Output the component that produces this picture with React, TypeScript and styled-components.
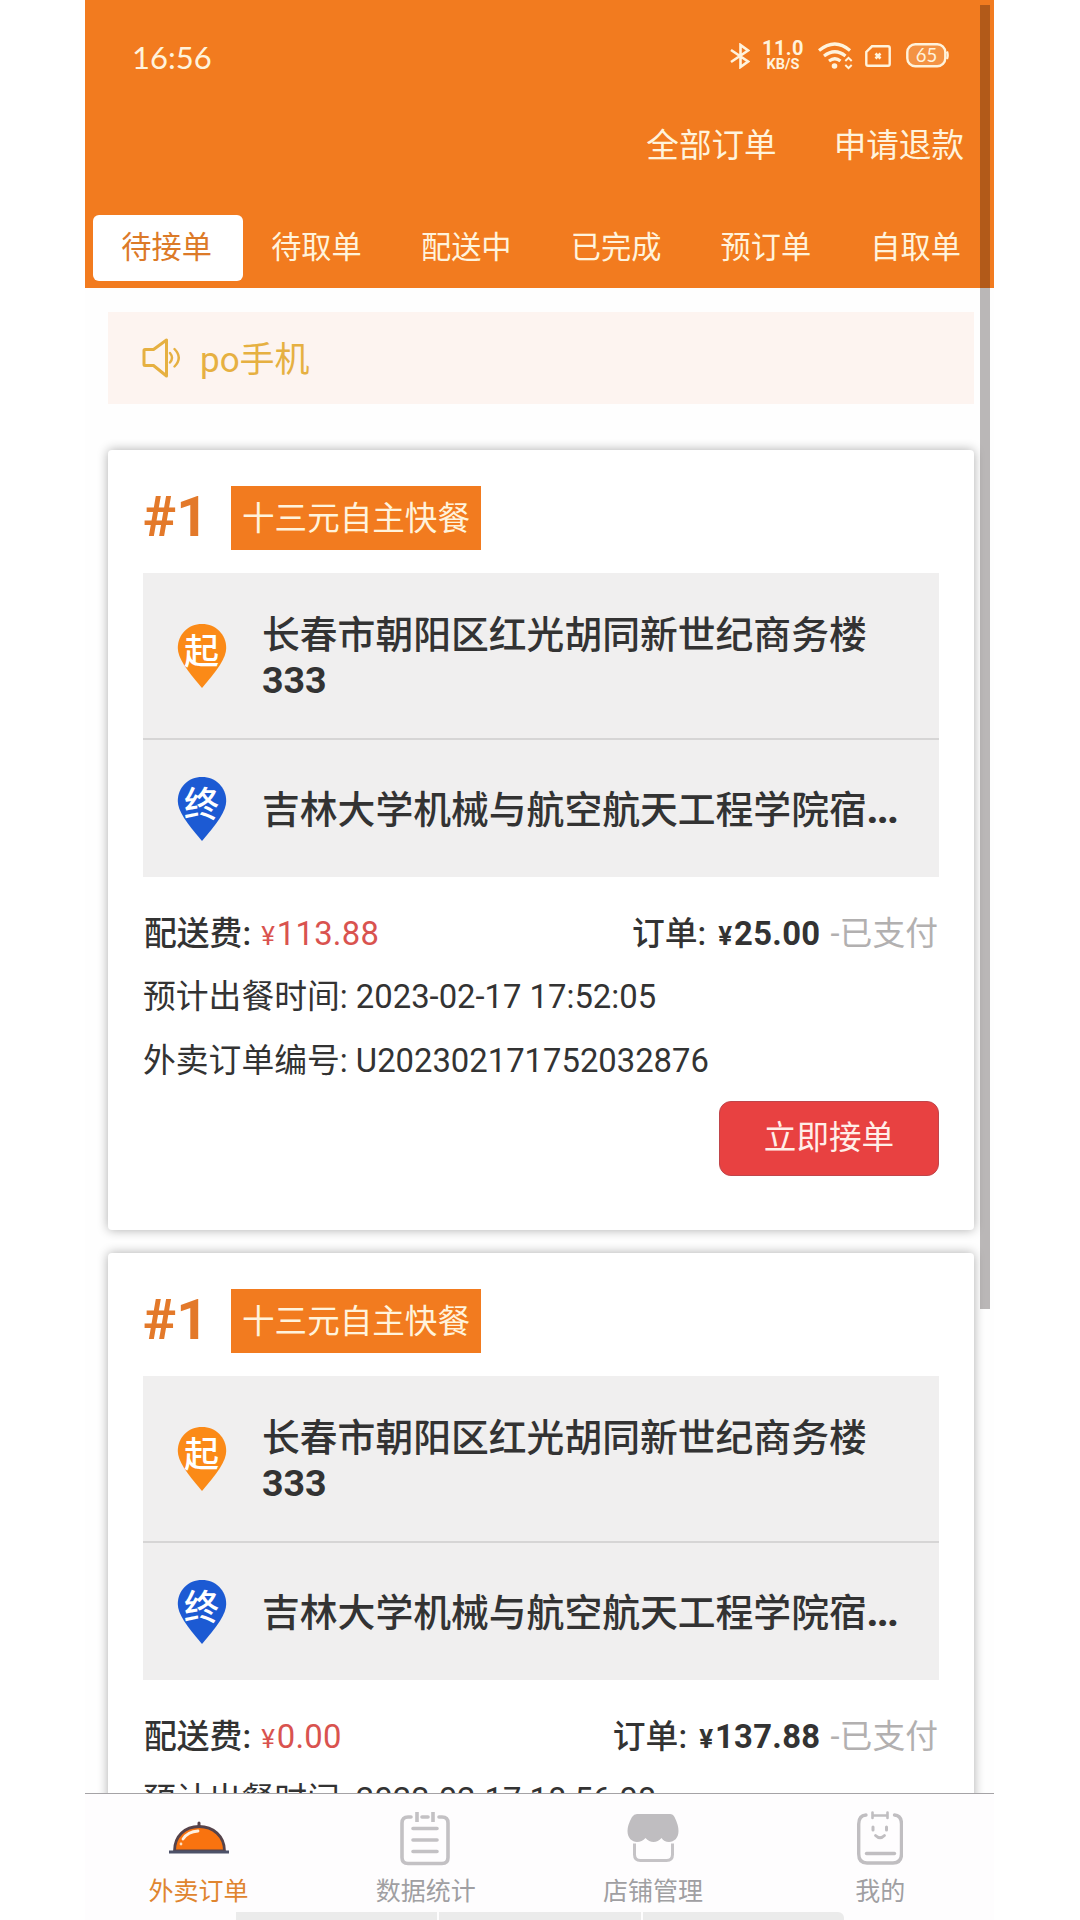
import React from "react";
import styled, { createGlobalStyle } from "styled-components";

const sans = `Roboto, "Noto Sans CJK SC", sans-serif`;

const Global = createGlobalStyle`
  * { box-sizing: border-box; }
  body { margin: 0; background: #fff; }
`;

const Screen = styled.div`
  position: relative;
  width: 909px;
  height: 1920px;
  margin-left: 85px;
  display: flex;
  flex-direction: column;
  overflow: hidden;
  background: #fefefe;
  color: #333;
  font-family: ${sans};
  white-space: nowrap;
`;

const Header = styled.header`
  flex: none;
  height: 288px;
  display: flex;
  flex-direction: column;
  background: #f27b1f;
  color: #fff3dc;
`;

const StatusBar = styled.div`
  height: 111px;
  padding: 0 45px 0 47px;
  display: flex;
  align-items: center;
  justify-content: space-between;
`;

const Clock = styled.span`
  padding-top: 2px;
  font: 400 31px/40px Lato, sans-serif;
`;

const StatusIcons = styled.div`
  display: flex;
  align-items: center;
`;

const Speed = styled.div`
  width: 44px;
  margin: 0 13px 0 11px;
  text-align: center;
  font-weight: 700;
  font-size: 20px;
  line-height: 18px;
  letter-spacing: 0.4px;
  padding-top: 1px;
`;

const SpeedUnit = styled.div`
  font-size: 14.5px;
  line-height: 16px;
  letter-spacing: 0;
`;

const SimSlot = styled.div`
  display: flex;
  margin: 0 15px 0 12px;
`;

const Links = styled.div`
  height: 68px;
  padding: 2px 30px 0 0;
  display: flex;
  justify-content: flex-end;
  align-items: center;
  gap: 57px;
  font-size: 32.6px;
  line-height: 48px;
`;

const Tabs = styled.nav`
  margin: 36px 0 0 8px;
  height: 66px;
  display: flex;
`;

const Tab = styled.div<{ $active?: boolean }>`
  flex: none;
  width: 149.8px;
  height: 66px;
  padding-right: 2.5px;
  border-radius: 6px;
  text-align: center;
  font-size: 30.2px;
  line-height: 65px;
  background: ${(p) => (p.$active ? "#fff" : "transparent")};
  color: ${(p) => (p.$active ? "#dc7a28" : "inherit")};
`;

const Feed = styled.main`
  flex: 1;
  min-height: 0;
  overflow: hidden;
  padding: 24px 20px 0 23px;
`;

const Notice = styled.div`
  height: 92px;
  margin-bottom: 46px;
  padding-left: 34px;
  display: flex;
  align-items: center;
  gap: 19px;
  background: #fdf4f0;
  color: #e6b041;
  font-size: 35px;
  line-height: 50px;
`;

const NoticeText = styled.span`
  padding-top: 5px;
`;

const Card = styled.article`
  height: 780px;
  margin-bottom: 23px;
  padding: 36px 35px 0;
  border-radius: 4px;
  background: #fff;
  box-shadow: 0 0 11px rgba(0, 0, 0, 0.32);
`;

const CardHead = styled.div`
  height: 64px;
  display: flex;
  align-items: center;
  gap: 28px;
`;

const Serial = styled.span`
  width: 60px;
  padding-bottom: 3px;
  font-weight: 700;
  font-size: 56px;
  line-height: 60px;
  color: #e3792a;
`;

const Shop = styled.span`
  width: 250px;
  height: 64px;
  text-align: center;
  background: #f27b1f;
  color: #fff3dc;
  font-size: 32.6px;
  line-height: 67px;
`;

const Route = styled.div`
  margin-top: 23px;
  background: #f0efef;
`;

const Stop = styled.div<{ $tall?: boolean }>`
  height: ${(p) => (p.$tall ? 167 : 137)}px;
  padding: 0 34px;
  display: flex;
  align-items: center;
  gap: 35px;
  border-bottom: ${(p) => (p.$tall ? "2px solid #d6d5d5" : "none")};
`;

const Address = styled.div`
  padding-top: 5px;
  font-weight: 500;
  font-size: 37.8px;
  line-height: 45.5px;
`;

const RoomNo = styled.div`
  font-weight: 700;
  font-size: 37.6px;
`;

const Ellipsis = styled.b`
  font-weight: 900;
  letter-spacing: -1.2px;
`;

const Row = styled.div<{ $lead?: boolean }>`
  height: 64.2px;
  padding-top: ${(p) => (p.$lead ? 5 : 1)}px;
  display: flex;
  justify-content: space-between;
  align-items: center;
  font-size: 32.8px;
  line-height: 48px;
`;

const Details = styled.div`
  padding-top: 23px;
`;

const Strong = styled.span`
  margin-left: 1px;
  font-weight: 500;
`;

const Price = styled.span<{ $bold?: boolean }>`
  margin: 0 ${(p) => (p.$bold ? 2 : 0)}px;
  letter-spacing: 0.3px;
  font-weight: ${(p) => (p.$bold ? 700 : 400)};
  color: ${(p) => (p.$bold ? "inherit" : "#d9534f")};
`;

const Yen = styled.small`
  margin: 0 1.5px 0 2px;
  font-size: 26px;
`;

const Paid = styled.span`
  margin-right: 1px;
  color: #b2b0b0;
`;

const Accept = styled.button`
  display: block;
  width: 220px;
  height: 75px;
  margin: 8px 0 0 auto;
  padding: 0;
  border: 1px solid #c0454a;
  border-radius: 12px;
  background: #e84141;
  color: #ffeee8;
  font: 400 32.6px/48px ${sans};
`;

const BottomNav = styled.footer`
  flex: none;
  height: 127px;
  border-top: 1px solid #a5a3a6;
  display: flex;
  background: #fefdfe;
`;

const NavItem = styled.div<{ $active?: boolean }>`
  flex: 1;
  padding-top: 17px;
  display: flex;
  flex-direction: column;
  align-items: center;
  font-size: 25px;
  line-height: 36px;
  color: ${(p) => (p.$active ? "#e0852f" : "#a09fa2")};
  svg { margin-bottom: 7px; }
`;

const ScrollThumb = styled.div`
  position: absolute;
  top: 5px;
  right: 4px;
  width: 10px;
  height: 1304px;
  background: rgba(20, 10, 10, 0.29);
`;

const HomeHint = styled.div`
  position: absolute;
  left: 151px;
  bottom: 0;
  width: 608px;
  height: 8px;
  display: flex;
  gap: 2px;
`;

const HintPart = styled.div`
  flex: 1;
  background: #ebebeb;
  &:last-child { border-top-right-radius: 6px; }
`;

const Bluetooth = () => (
  <svg width="20" height="26" viewBox="0 0 20 26" fill="none" stroke="currentColor" strokeWidth="2.6">
    <path d="M1 7 L18 18.500 L10.500 24 V2 L18 7.500 L1 19" />
  </svg>
);

const Wifi = () => (
  <svg width="35" height="28" viewBox="0 0 35 28" fill="none" stroke="currentColor" strokeWidth="3.200">
    <path d="M1 8.500 Q17 -4.500 32 8.500" />
    <path d="M6 14 Q17 5.500 27.500 14" />
    <path d="M11 19 Q17 14.500 22.500 19" />
    <circle cx="16.500" cy="24" r="2.800" fill="currentColor" stroke="none" />
    <path d="M27.300 19 L30.500 15.800 L33.700 19 M27.300 23 L30.500 26.200 L33.700 23" strokeWidth="2" />
  </svg>
);

const Sim = () => (
  <svg width="26" height="22" viewBox="0 0 26 22" fill="none" stroke="currentColor" strokeWidth="2.400">
    <path d="M7 1.300 H23 Q24.700 1.300 24.700 3 V19 Q24.700 20.700 23 20.700 H3 Q1.300 20.700 1.300 19 V7 Z" />
    <path d="M10.500 8.500 L15.500 13.500 M15.500 8.500 L10.500 13.500" strokeWidth="2.600" />
  </svg>
);

const Battery = () => (
  <svg width="43" height="25" viewBox="0 0 43 25" fill="none" stroke="currentColor">
    <rect x="1.300" y="1.300" width="38" height="22" rx="8" strokeWidth="2.400" fill="rgba(255,243,220,.2)" />
    <path d="M41 8.500 Q42.500 12.300 41 16" strokeWidth="2.200" />
    <text x="20.500" y="18.600" textAnchor="middle" fontFamily="Lato, sans-serif" fontSize="18.500" fill="currentColor" stroke="none">65</text>
  </svg>
);

const Speaker = () => (
  <svg width="39" height="40" viewBox="0 0 39 40" fill="none" stroke="currentColor" strokeWidth="3" strokeLinejoin="round" strokeLinecap="round">
    <path d="M2 12.500 Q2 11.500 3 11.500 H11.500 L24.500 2 V38 L11.500 27.500 H3 Q2 27.500 2 26.500 Z" />
    <path d="M28 15 Q32 19.800 28 24.500 M32.500 11 Q41 19.800 32.500 28.500" strokeWidth="2.400" />
  </svg>
);

const Pin = ({ color, label }: { color: string; label: string }) => (
  <svg width="50" height="66" viewBox="0 0 50 66">
    <path d="M25 1 C11 1 .800 11.500 .800 25 C.800 35 9 46 25 65 C41 46 49.200 35 49.200 25 C49.200 11.500 39 1 25 1 Z" fill={color} />
    <text x="24.500" y="41" textAnchor="middle" fontFamily='"Noto Sans CJK SC", sans-serif' fontSize="35" fontWeight="500" fill="#fff">{label}</text>
  </svg>
);

const Cloche = () => (
  <svg width="62" height="56" viewBox="0 0 62 56" fill="none">
    <path d="M31 12 V17" stroke="#56434a" strokeWidth="3" strokeLinecap="round" />
    <path d="M6.500 40 C6.500 25 17 15.500 31 15.500 C45 15.500 56.500 25 56.500 40 Z" fill="#f9730f" stroke="#56434a" strokeWidth="2.800" />
    <path d="M15 28 Q20 20.500 30 20" stroke="#fff1df" strokeWidth="2.800" strokeLinecap="round" />
    <circle cx="13" cy="33" r="1.400" fill="#ffe0c0" />
    <path d="M1 41 H61" stroke="#4d5269" strokeWidth="3" />
  </svg>
);

const Notepad = () => (
  <svg width="52" height="56" viewBox="0 0 52 56" fill="none" stroke="#c3c1c4" strokeWidth="3.600" strokeLinecap="round">
    <path d="M11 6 H8 Q2 6 2 12 V46.500 Q2 52.500 8 52.500 H42 Q48 52.500 48 46.500 V12 Q48 6 42 6 H39 M22 6 H28" />
    <path d="M17 1 V11 M33 1 V11" strokeLinecap="butt" />
    <path d="M13 17.500 H37 M13 29 H37 M13 40.500 H37" />
  </svg>
);

const Store = () => (
  <svg width="52" height="56" viewBox="0 0 52 56" fill="none">
    <path d="M10 3 H43 Q46 3 47.500 6 Q51.500 14 51.500 20 C51.500 27 47 31 42 31 Q37 31 34.500 27 Q31 31 26.500 31 Q22 31 18.500 27 Q15 31 10 31 C5 31 .500 27 .500 20 Q.500 14 5 6 Q7 3 10 3 Z" fill="#bfbdc0" />
    <path d="M7.500 32.500 V43.500 Q7.500 49.500 13.500 49.500 H39.500 Q45.500 49.500 45.500 43.500 V32.500" stroke="#c5c3c6" strokeWidth="3" />
  </svg>
);

const Face = () => (
  <svg width="46" height="56" viewBox="1 0 46 56" fill="none" stroke="#c0bec1" strokeWidth="3.400" strokeLinecap="round">
    <path d="M10 4 Q2.700 4.500 2.700 13 V43 Q2.700 52 11 52 H37 Q45.500 52 45.500 43 V13 Q45.500 4.500 38.500 4" />
    <path d="M16.500 1.500 V7 M31.500 1.500 V7 M16.500 4.500 H31.500" strokeWidth="2.600" />
    <path d="M17 16 V19 M30.500 16 V19" strokeWidth="3" />
    <path d="M19.500 24.500 Q24 29 28.500 24.500" strokeWidth="2.800" />
    <path d="M10.500 42.500 H38.500" />
  </svg>
);

const orders = [
  { fee: "113.88", total: "25.00", time: "2023-02-17 17:52:05", code: "U202302171752032876" },
  { fee: "0.00", total: "137.88", time: "2023-02-17 18:56:08", code: "U202302171756082877" },
];

type Order = (typeof orders)[number];

const OrderCard = ({ order }: { order: Order }) => (
  <Card>
    <CardHead>
      <Serial>#1</Serial>
      <Shop>十三元自主快餐</Shop>
    </CardHead>
    <Route>
      <Stop $tall>
        <Pin color="#fb8a17" label="起" />
        <Address>
          长春市朝阳区红光胡同新世纪商务楼
          <RoomNo>333</RoomNo>
        </Address>
      </Stop>
      <Stop>
        <Pin color="#1c5ad3" label="终" />
        <Address>吉林大学机械与航空航天工程学院宿<Ellipsis>...</Ellipsis></Address>
      </Stop>
    </Route>
    <Details>
      <Row $lead>
        <span>
          <Strong>配送费: </Strong>
          <Price><Yen>¥</Yen>{order.fee}</Price>
        </span>
        <span>
          <Strong>订单: </Strong>
          <Price $bold><Yen>¥</Yen>{order.total}</Price> <Paid>-已支付</Paid>
        </span>
      </Row>
      <Row>预计出餐时间: {order.time}</Row>
      <Row>外卖订单编号: {order.code}</Row>
    </Details>
    <Accept>立即接单</Accept>
  </Card>
);

const tabs = ["待接单", "待取单", "配送中", "已完成", "预订单", "自取单"];

const navItems = [
  { label: "外卖订单", icon: <Cloche /> },
  { label: "数据统计", icon: <Notepad /> },
  { label: "店铺管理", icon: <Store /> },
  { label: "我的", icon: <Face /> },
];

export default function App() {
  return (
    <>
      <Global />
      <Screen>
        <Header>
          <StatusBar>
            <Clock>16:56</Clock>
            <StatusIcons>
              <Bluetooth />
              <Speed>
                11.0
                <SpeedUnit>KB/S</SpeedUnit>
              </Speed>
              <Wifi />
              <SimSlot>
                <Sim />
              </SimSlot>
              <Battery />
            </StatusIcons>
          </StatusBar>
          <Links>
            <span>全部订单</span>
            <span>申请退款</span>
          </Links>
          <Tabs>
            {tabs.map((t, i) => (
              <Tab key={t} $active={i === 0}>{t}</Tab>
            ))}
          </Tabs>
        </Header>
        <Feed>
          <Notice>
            <Speaker />
            <NoticeText>po手机</NoticeText>
          </Notice>
          {orders.map((o) => (
            <OrderCard key={o.code} order={o} />
          ))}
        </Feed>
        <BottomNav>
          {navItems.map((n, i) => (
            <NavItem key={n.label} $active={i === 0}>
              {n.icon}
              {n.label}
            </NavItem>
          ))}
        </BottomNav>
        <ScrollThumb />
        <HomeHint>
          <HintPart />
          <HintPart />
          <HintPart />
        </HomeHint>
      </Screen>
    </>
  );
}
